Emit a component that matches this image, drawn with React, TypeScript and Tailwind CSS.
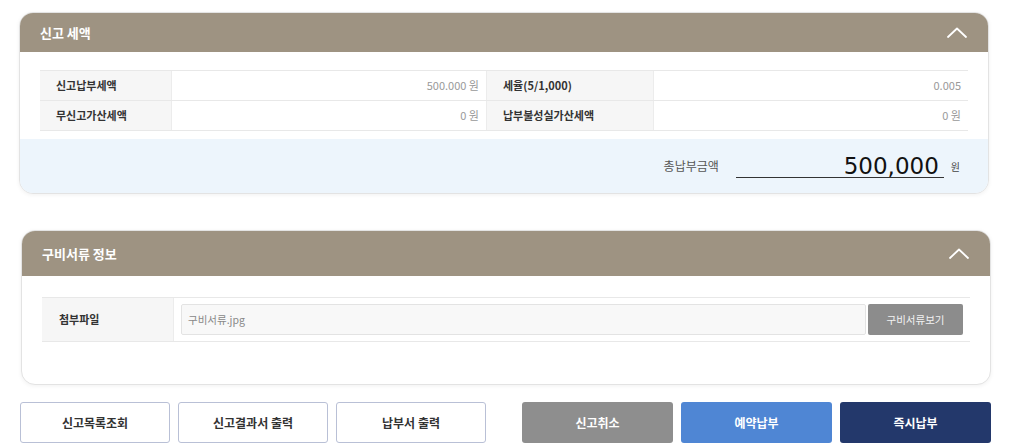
import type { ReactNode } from 'react';

const KR = { fontFamily: '"Noto Sans CJK KR", "Noto Sans", sans-serif' };

function Chevron() {
  return (
    <svg width="20" height="11" viewBox="0 0 20 11" fill="none" stroke="white" strokeWidth="1.8" strokeLinecap="round" strokeLinejoin="round">
      <path d="M1 10 L10 1.5 L19 10" />
    </svg>
  );
}

function CardHeader({ title, tall }: { title: string; tall?: boolean }) {
  return (
    <div className={`flex items-center justify-between bg-[#9e9382] pl-[20px] pr-[21px] ${tall ? 'h-[45px]' : 'h-[39px]'}`}>
      <span className="text-[13px] font-bold text-white">{title}</span>
      <Chevron />
    </div>
  );
}

function Label({ children, w }: { children: ReactNode; w: string }) {
  return (
    <div className={`${w} flex h-full items-center border-r border-[#ececec] bg-[#f6f6f6] pl-[16px] text-[11px] font-bold text-[#333]`}>
      {children}
    </div>
  );
}

function Value({ children, w }: { children: ReactNode; w: string }) {
  return (
    <div className={`${w} flex h-full items-center justify-end pr-[7px] text-[11px] text-[#999]`}>
      {children}
    </div>
  );
}

function TaxRow({ l1, v1, l2, v2 }: { l1: string; v1: string; l2: string; v2: string }) {
  return (
    <div className="flex h-[30px] border-b border-[#e8e8e8]">
      <Label w="w-[132px]">{l1}</Label>
      <Value w="w-[315px] border-r border-[#ececec]">{v1}</Value>
      <Label w="w-[167px]">{l2}</Label>
      <Value w="flex-1">{v2}</Value>
    </div>
  );
}

function ActionButton({ children, tone }: { children: ReactNode; tone: 'line' | 'gray' | 'blue' | 'navy' }) {
  const tones = {
    line: 'w-[150px] border border-[#b9c0d6] bg-white text-[#333]',
    gray: 'w-[151px] bg-[#8e8e8e] text-white',
    blue: 'w-[151px] bg-[#4f86d4] text-white',
    navy: 'w-[151px] bg-[#23386b] text-white',
  };
  return (
    <button className={`flex h-[41px] items-center justify-center rounded-[3px] text-[12px] font-bold ${tones[tone]}`}>
      {children}
    </button>
  );
}

export default function App() {
  return (
    <div className="h-[448px] w-[1009px] overflow-hidden bg-white pt-[12px]" style={KR}>
      {/* 신고 세액 */}
      <div className="ml-[19px] w-[970px] overflow-hidden rounded-[14px] border border-[#e3e3e3] bg-white shadow-[0_1px_4px_rgba(0,0,0,0.06)]">
        <CardHeader title="신고 세액" />
        <div className="px-[20px] pt-[18px]">
          <div className="border-t border-[#e8e8e8]">
            <TaxRow l1="신고납부세액" v1="500.000 원" l2="세율(5/1,000)" v2="0.005" />
            <TaxRow l1="무신고가산세액" v1="0 원" l2="납부불성실가산세액" v2="0 원" />
          </div>
        </div>
        <div className="mt-[8px] flex h-[54px] items-center justify-end bg-[#edf5fc] pr-[28px]">
          <span className="text-[12px] text-[#555]">총납부금액</span>
          <div className="ml-[17px] flex h-[24px] w-[208px] items-center justify-end border-b border-[#333] pr-[5px]">
            <span className="text-[23px] leading-[24px] text-[#111]" style={{ fontFamily: '"DejaVu Sans", sans-serif' }}>
              500,000
            </span>
          </div>
          <span className="ml-[7px] text-[10px] text-[#444]">원</span>
        </div>
      </div>

      {/* 구비서류 정보 */}
      <div className="ml-[21px] mt-[36px] w-[970px] overflow-hidden rounded-[14px] border border-[#e3e3e3] bg-white pb-[42px] shadow-[0_1px_4px_rgba(0,0,0,0.06)]">
        <CardHeader title="구비서류 정보" tall />
        <div className="px-[20px] pt-[21px]">
          <div className="flex h-[45px] items-center border-y border-[#e8e8e8]">
            <div className="flex h-full w-[132px] items-center border-r border-[#ececec] bg-[#f6f6f6] pl-[17px] text-[11px] font-bold text-[#333]">
              첨부파일
            </div>
            <div className="flex flex-1 items-center gap-[2px] pl-[7px] pr-[7px]">
              <div className="flex h-[31px] flex-1 items-center rounded-[2px] border border-[#e3e3e3] bg-[#f8f8f8] pl-[6px] text-[10.5px] text-[#888]">
                구비서류.jpg
              </div>
              <button className="flex h-[31px] w-[95px] items-center justify-center rounded-[2px] bg-[#8c8c8c] text-[10.5px] text-[#f2f2f2]">
                구비서류보기
              </button>
            </div>
          </div>
        </div>
      </div>

      {/* 하단 버튼 */}
      <div className="ml-[20px] mt-[17px] flex w-[971px] justify-between">
        <div className="flex gap-[8px]">
          <ActionButton tone="line">신고목록조회</ActionButton>
          <ActionButton tone="line">신고결과서 출력</ActionButton>
          <ActionButton tone="line">납부서 출력</ActionButton>
        </div>
        <div className="flex gap-[8px]">
          <ActionButton tone="gray">신고취소</ActionButton>
          <ActionButton tone="blue">예약납부</ActionButton>
          <ActionButton tone="navy">즉시납부</ActionButton>
        </div>
      </div>
    </div>
  );
}
